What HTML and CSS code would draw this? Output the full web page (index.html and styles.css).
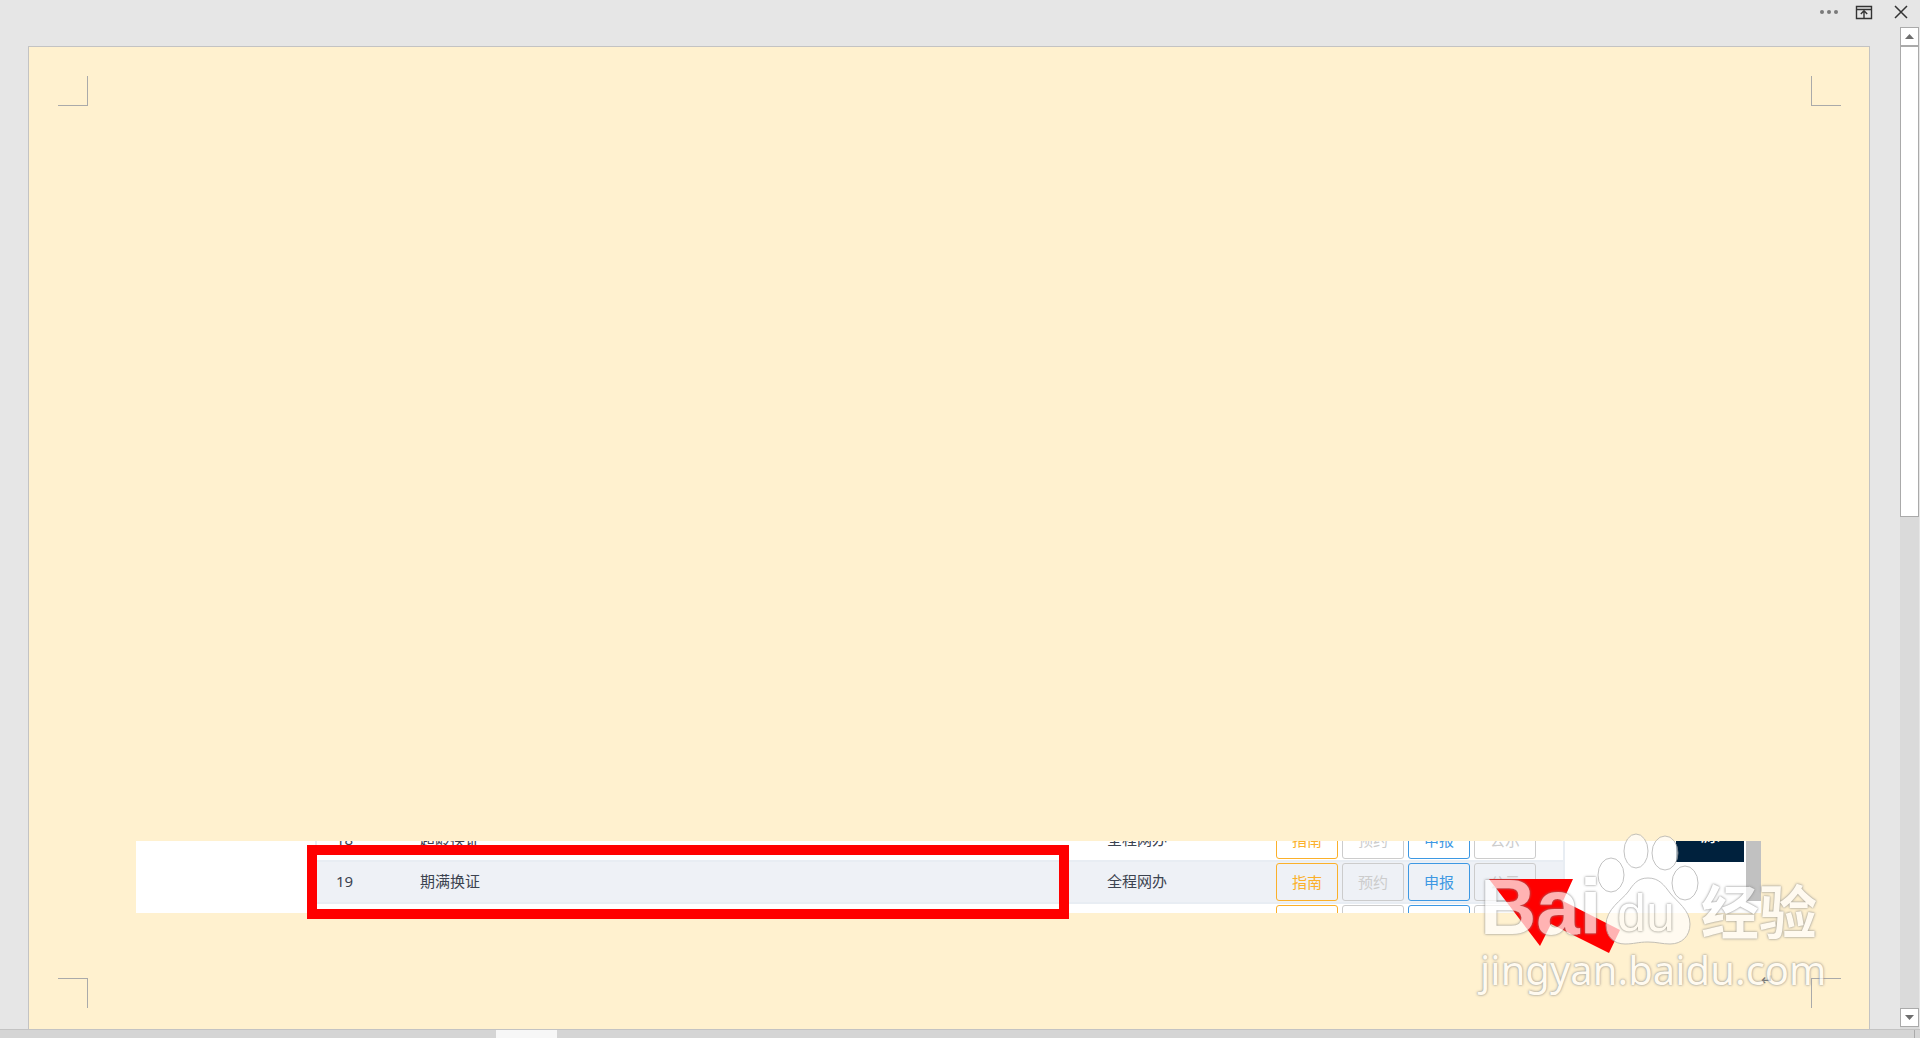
FILE: index.html
```html
<!DOCTYPE html>
<html lang="zh-CN">
  <head>
    <meta charset="UTF-8" />
    <meta name="viewport" content="width=device-width, initial-scale=1.0" />
    <title>期满换证</title>
    <link rel="stylesheet" href="styles.css">
  </head>
  <body>
    <div class="window">
      <div class="main">
        <div class="titlebar">
          <button class="tool" aria-label="More">
            <svg width="20" height="20" viewBox="0 0 20 20"><g fill="#7a7a7a"><circle cx="3" cy="10" r="2"/><circle cx="10" cy="10" r="2"/><circle cx="17" cy="10" r="2"/></g></svg>
          </button>
          <button class="tool" aria-label="Ribbon display options">
            <svg width="20" height="20" viewBox="0 0 20 20" fill="none" stroke="#333"><path d="M1.500 4.500h15v12h-15zM1.500 7.500h15" stroke-width="1.400"/><path d="M9 16V9M5.800 12L9 8.800l3.200 3.200" stroke-width="1.400"/></svg>
          </button>
          <button class="tool" aria-label="Close">
            <svg width="20" height="20" viewBox="0 0 20 20" stroke="#333" stroke-width="1.500"><path d="M4 4l12 12M16 4L4 16"/></svg>
          </button>
        </div>

        <div class="view">
          <div class="page">
            <div class="marks">
              <span class="mark top-left"></span>
              <span class="mark top-right"></span>
            </div>

            <div class="picture">
              <div class="strip">
                <table class="items">
                  <tr>
                    <td class="num">18</td>
                    <td class="name">超龄换证</td>
                    <td class="way">全程网办</td>
                    <td class="actions"><div class="buttons">
                      <button class="guide">指南</button>
                      <button class="off">预约</button>
                      <button class="apply">申报</button>
                      <button class="off">公示</button>
                    </div></td>
                  </tr>
                  <tr class="striped">
                    <td class="num">19</td>
                    <td class="name">期满换证</td>
                    <td class="way">全程网办</td>
                    <td class="actions"><div class="buttons">
                      <button class="guide">指南</button>
                      <button class="off">预约</button>
                      <button class="apply">申报</button>
                      <button class="off">公示</button>
                    </div></td>
                  </tr>
                  <tr>
                    <td class="num"></td>
                    <td class="name"></td>
                    <td class="way"></td>
                    <td class="actions"><div class="buttons">
                      <button class="guide" aria-label="指南"></button>
                      <button class="off" aria-label="预约"></button>
                      <button class="apply" aria-label="申报"></button>
                      <button class="off" aria-label="公示"></button>
                    </div></td>
                  </tr>
                </table>
                <div class="side">源</div>
                <div class="strip-scroll"></div>
              </div>
              <div class="red-box"></div>
              <svg class="arrow" width="131" height="74" viewBox="0 0 131 74"><path d="M0 0H84L74 22 131 51 120 74 62 45 51 67Z" fill="#f00"/></svg>
              <span class="enter">↵</span>
              <div class="watermark">
                <div class="logo">
                  <span class="bai">Bai</span>
                  <span class="paw">
                    <svg width="104" height="112" viewBox="0 0 104 112"><g fill="#fff" stroke="#aaa" stroke-width="1"><ellipse cx="39" cy="18" rx="12" ry="17"/><ellipse cx="68" cy="20" rx="13" ry="17"/><ellipse cx="14" cy="42" rx="13" ry="17"/><ellipse cx="88" cy="50" rx="13" ry="17"/><path d="M51 45c-11 0-15 7-20 14-6 8-22 17-22 33 0 12 8 19 19 19 9 0 13-2 23-2 9 0 14 2 22 2 12 0 20-8 20-20 0-14-13-22-20-31-6-8-11-15-22-15z"/></g></svg>
                    <span class="du">du</span>
                  </span>
                  <span class="exp">经验</span>
                </div>
                <div class="site">jingyan.baidu.com</div>
              </div>
            </div>

            <div class="marks">
              <span class="mark bottom-left"></span>
              <span class="mark bottom-right"></span>
            </div>
          </div>

          <div class="scrollbar">
            <button class="scroll-btn" aria-label="Scroll up"><svg width="9" height="5" viewBox="0 0 9 5"><path d="M0 5L4.500 0 9 5z" fill="#6e6e6e"/></svg></button>
            <div class="thumb"></div>
            <button class="scroll-btn down" aria-label="Scroll down"><svg width="9" height="5" viewBox="0 0 9 5"><path d="M0 0L4.500 5 9 0z" fill="#6e6e6e"/></svg></button>
          </div>
        </div>

        <div class="statusbar"><div class="status-item"></div><div class="status-end"></div></div>
      </div>
    </div>
  </body>
</html>
```
FILE: styles.css
```css
* {
  box-sizing: border-box;
}

body {
  margin: 0;
  font-family: "Noto Sans", "Noto Sans CJK SC", sans-serif;
  background-color: #fff;
}

button {
  padding: 0;
  font-family: inherit;
  cursor: pointer;
}

.window {
  height: 100vh;
  padding-right: 8px;
  overflow: hidden;
}

.main {
  height: 100%;
  display: flex;
  flex-direction: column;
  background-color: #e6e6e6;
}

.titlebar {
  display: flex;
  justify-content: flex-end;
  gap: 16px;
  height: 27px;
  padding: 2px 9px 0 0;
}

.tool {
  width: 20px;
  height: 20px;
  border: none;
  background: none;
}

.tool svg {
  display: block;
}

.view {
  flex: 1;
  display: flex;
  gap: 30px;
  min-height: 0;
  padding: 0 1px 0 28px;
}

.page {
  flex: 1;
  display: flex;
  flex-direction: column;
  justify-content: space-between;
  margin-top: 19px;
  padding: 29px 28px 21px 29px;
  border: 1px solid #c3c3c3;
  border-bottom: none;
  background-color: #fff1cf;
}

.marks {
  display: flex;
  justify-content: space-between;
}

.mark {
  width: 30px;
  height: 30px;
  border: 0 solid #aaa;
}

.top-left {
  border-width: 0 1px 1px 0;
}

.top-right {
  border-width: 0 0 1px 1px;
}

.bottom-left {
  border-width: 1px 1px 0 0;
}

.bottom-right {
  border-width: 1px 0 0 1px;
}

.picture {
  position: relative;
  margin: auto 80px 65px 78px;
}

.strip {
  display: flex;
  height: 72px;
  overflow: hidden;
  background-color: #fff;
}

/* the list is scrolled half a row */
.items {
  flex: 1;
  height: 126px;
  margin: -21px 111px 0 179px;
  border-collapse: separate;
  border-spacing: 0;
  border: 0 solid #e8edf3;
  border-width: 0 2px;
  table-layout: fixed;
  font-size: 15px;
  color: #3c4350;
}

.items td {
  height: 42px;
  padding: 0;
  line-height: 20px;
  border-bottom: 2px solid #e8edf3;
}

.striped {
  background-color: #eef1f6;
}

.items .num {
  width: 103px;
  padding-left: 19px;
}

.items .num,
.items .name,
.items .way {
  padding-bottom: 2px;
}

.way {
  width: 169px;
}

.actions {
  width: 287px;
}

.buttons {
  display: flex;
  gap: 4px;
}

.buttons button {
  width: 62px;
  height: 38px;
  font-size: 15px;
  line-height: 20px;
  border: 1px solid;
  border-radius: 3px;
  background: none;
}

.buttons .guide {
  color: #fbb02a;
}

.buttons .off {
  color: #ccc;
}

.buttons .apply {
  color: #3d98e3;
}

.side {
  width: 68px;
  height: 27px;
  margin: -6px 2px 0 0;
  font-size: 20px;
  line-height: 0;
  text-align: center;
  color: #fff;
  background-color: #00213d;
}

.strip-scroll {
  width: 15px;
  height: 60px;
  background-color: #c1c1c1;
}

.red-box {
  position: absolute;
  left: 171px;
  top: 4px;
  width: 762px;
  height: 74px;
  border: 10px solid #f00;
}

.arrow {
  position: absolute;
  right: 141px;
  top: 38px;
}

.enter {
  position: absolute;
  right: -13px;
  top: 128px;
  font-size: 15px;
  line-height: 20px;
  color: #777;
}

.watermark {
  position: absolute;
  right: -66px;
  top: -8px;
  width: 347px;
  color: #fff;
  opacity: 0.7;
  text-shadow: 0 0 2px #777, 0 0 3px #999;
}

.logo {
  display: flex;
  height: 112px;
}

.bai {
  width: 117px;
  font: bold 78px/148px "Liberation Sans", sans-serif;
}

.paw {
  position: relative;
  width: 104px;
}

.du {
  position: absolute;
  left: 20px;
  top: 58px;
  font: 52px/44px "Liberation Sans", sans-serif;
}

.exp {
  font: bold 58px/152px "Noto Sans CJK SC", sans-serif;
}

.site {
  font: 40px/50px "Noto Sans", sans-serif;
}

.scrollbar {
  display: flex;
  flex-direction: column;
  width: 19px;
  background-color: #dadada;
}

.scroll-btn {
  display: flex;
  align-items: center;
  justify-content: center;
  height: 19px;
  border: 1px solid #aaa;
  background-color: #fff;
}

.thumb {
  height: 47%;
  border: 1px solid #aaa;
  background-color: #fff;
}

.down {
  margin: auto 0 2px;
}

.statusbar {
  display: flex;
  justify-content: space-between;
  height: 9px;
  padding: 0 5px 0 496px;
  border-top: 1px solid #c3c3c3;
  background-color: #d5d5d5;
}

.status-item {
  width: 61px;
  background-color: #f7f7f7;
}

.status-end {
  width: 1px;
  background-color: #aaa;
}
```
